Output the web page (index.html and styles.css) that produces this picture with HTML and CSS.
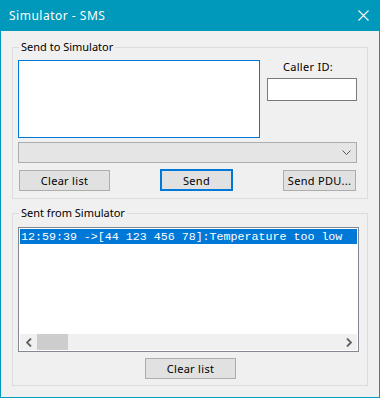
FILE: index.html
```html
<!DOCTYPE html>
<html lang="en">
<head>
    <meta charset="UTF-8">
    <title>Simulator - SMS</title>
    <link rel="stylesheet" href="styles.css">
</head>
<body>
    <div class="window">
        <div class="titlebar">
            <span class="title">Simulator - SMS</span>
            <svg class="close" width="11" height="11" viewBox="0 0 11 11">
                <path d="M0.5 0.5 L10.5 10.5 M10.5 0.5 L0.5 10.5" stroke="#fff" stroke-width="1.1" fill="none"/>
            </svg>
        </div>

        <div class="client">
            <fieldset class="group send-group">
                <legend>Send to Simulator</legend>
                <div class="compose-row">
                    <textarea class="message"></textarea>
                    <div class="caller">
                        <label class="caller-label">Caller ID:</label>
                        <input class="caller-input" type="text">
                    </div>
                </div>
                <div class="combo">
                    <svg class="chevron" width="9" height="5" viewBox="0 0 9 5">
                        <path d="M0.5 0.5 L4.5 4.5 L8.5 0.5" stroke="#555" stroke-width="1" fill="none"/>
                    </svg>
                </div>
                <div class="button-row">
                    <button class="button">Clear list</button>
                    <button class="button button-default">Send</button>
                    <button class="button">Send PDU...</button>
                </div>
            </fieldset>

            <fieldset class="group sent-group">
                <legend>Sent from Simulator</legend>
                <div class="listbox">
                    <div class="list-items">
                        <div class="list-item selected">12:59:39 -&gt;[44 123 456 78]:Temperature too low</div>
                    </div>
                    <div class="hscroll">
                        <div class="scroll-arrow">
                            <svg width="6" height="9" viewBox="0 0 6 9"><path d="M5 0.5 L1 4.5 L5 8.5" stroke="#606060" stroke-width="1.8" fill="none"/></svg>
                        </div>
                        <div class="scroll-track"><div class="scroll-thumb"></div></div>
                        <div class="scroll-arrow">
                            <svg width="6" height="9" viewBox="0 0 6 9"><path d="M1 0.5 L5 4.5 L1 8.5" stroke="#606060" stroke-width="1.8" fill="none"/></svg>
                        </div>
                    </div>
                </div>
                <div class="bottom-row">
                    <button class="button">Clear list</button>
                </div>
            </fieldset>
        </div>
    </div>
</body>
</html>
```

FILE: styles.css
```css
body {
    margin: 0;
    font-family: "Noto Sans", Arial, sans-serif;
    font-size: 11px;
    color: #000;
}
.window {
    width: 380px;
    height: 398px;
    box-sizing: border-box;
    border: 1px solid #0099bc;
    border-top: 0;
    background: #f0f0f0;
}
.titlebar {
    height: 31px;
    background: #0099bc;
    display: flex;
    align-items: center;
    justify-content: space-between;
    padding: 0 10px 0 8px;
}
.title {
    color: #fff;
    font-size: 12px;
    letter-spacing: 0.5px;
}
.close {
    display: block;
}
.client {
    padding: 8px 0 0 11px;
}
.group {
    margin: 0;
    width: 356px;
    min-width: 0;
    box-sizing: border-box;
    border: 1px solid #dcdcdc;
    padding: 5px 0 7px 5px;
}
.group legend {
    padding: 0 2px;
    margin-left: 1px;
    line-height: 16px;
}
.sent-group {
    margin-top: 6px;
    padding-top: 6px;
    padding-bottom: 6px;
}
.compose-row {
    display: flex;
    gap: 7px;
}
.message {
    display: block;
    width: 242px;
    height: 78px;
    box-sizing: border-box;
    margin: 0;
    border: 1px solid #0078d7;
    resize: none;
    outline: none;
}
.caller {
    width: 90px;
}
.caller-label {
    display: block;
    margin: -1px 0 3px 16px;
    line-height: 16px;
    letter-spacing: 0.3px;
}
.caller-input {
    display: block;
    width: 90px;
    height: 23px;
    box-sizing: border-box;
    margin: 0;
    border: 1px solid #7a7a7a;
    background: #fff;
}
.combo {
    width: 339px;
    height: 21px;
    box-sizing: border-box;
    margin-top: 4px;
    background: #e5e5e5;
    border: 1px solid #adadad;
    display: flex;
    align-items: center;
    justify-content: flex-end;
    padding-right: 5px;
}
.chevron {
    display: block;
}
.button-row {
    width: 339px;
    box-sizing: border-box;
    padding: 0 1px;
    margin-top: 7px;
    display: flex;
    justify-content: space-between;
    align-items: flex-start;
}
.button {
    width: 91px;
    height: 21px;
    box-sizing: border-box;
    margin: 0;
    padding: 0;
    background: #e1e1e1;
    border: 1px solid #adadad;
    font-family: inherit;
    font-size: 11px;
    letter-spacing: 0.3px;
    color: #000;
}
.button-row .button:nth-child(2),
.button-row .button:nth-child(3) {
    width: 73px;
}
.button-default {
    border: 2px solid #0078d7;
    height: 22px;
    margin-top: -1px;
}
.listbox {
    width: 341px;
    height: 125px;
    box-sizing: border-box;
    border: 1px solid #828790;
    background: #fff;
    padding: 1px;
}
.list-items {
    height: 105px;
}
.list-item {
    height: 15px;
    line-height: 15px;
    padding-left: 1px;
    font-family: "Liberation Mono", "Courier New", monospace;
    font-size: 11.65px;
    white-space: nowrap;
}
.selected {
    background: #0078d7;
    color: #fff;
}
.hscroll {
    height: 16px;
    background: #f0f0f0;
    display: flex;
}
.scroll-arrow {
    width: 17px;
    display: flex;
    align-items: center;
    justify-content: center;
}
.scroll-track {
    flex: 1;
}
.scroll-thumb {
    width: 31px;
    height: 100%;
    background: #cdcdcd;
}
.bottom-row {
    padding-left: 127px;
    margin-top: 6px;
}
```
